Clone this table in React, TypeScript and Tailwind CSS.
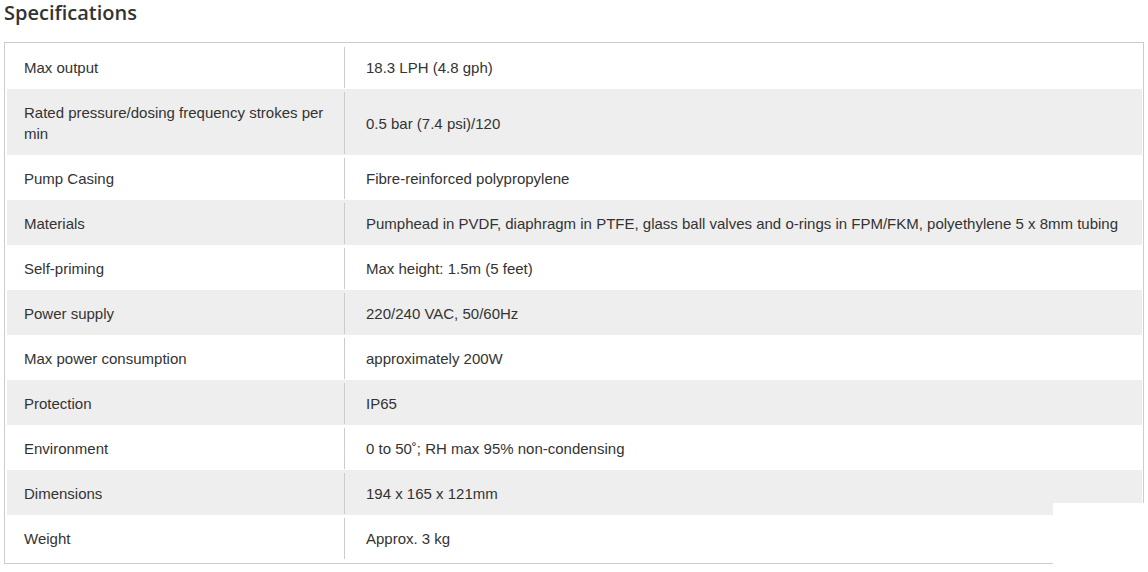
const specs: [string, string][] = [
  ['Max output', '18.3 LPH (4.8 gph)'],
  ['Rated pressure/dosing frequency strokes per min', '0.5 bar (7.4 psi)/120'],
  ['Pump Casing', 'Fibre-reinforced polypropylene'],
  ['Materials', 'Pumphead in PVDF, diaphragm in PTFE, glass ball valves and o-rings in FPM/FKM, polyethylene 5 x 8mm tubing'],
  ['Self-priming', 'Max height: 1.5m (5 feet)'],
  ['Power supply', '220/240 VAC, 50/60Hz'],
  ['Max power consumption', 'approximately 200W'],
  ['Protection', 'IP65'],
  ['Environment', '0 to 50˚; RH max 95% non-condensing'],
  ['Dimensions', '194 x 165 x 121mm'],
  ['Weight', 'Approx. 3 kg'],
];

export default function App() {
  return (
    <div className="relative w-[1148px] h-[572px] overflow-hidden bg-white">
      <h2 className="pl-[4px] pt-[1px] h-[42px] text-[20px] leading-[24px] font-semibold text-[#333] font-['Open_Sans',sans-serif]">
        Specifications
      </h2>
      <div className="ml-[4px] w-[1140px] border border-[#ccc] pl-[2px] pr-[1px] pt-[1px] pb-[3px] font-['Liberation_Sans',Arial,sans-serif] text-[15px] leading-[21px] text-[#333]">
        {specs.map(([label, value], i) => (
          <div
            key={label}
            className={`flex pt-[3px] pb-[1px] ${i % 2 === 1 ? 'bg-[#eee]' : 'bg-white'} ${i === 1 ? 'h-[66px]' : 'h-[45px]'}`}
          >
            <div className="w-[338px] shrink-0 border-r border-[#ccc] pl-[17px] pr-[14px] flex items-center">
              {label}
            </div>
            <div className="flex-1 pl-[21px] flex items-center">{value}</div>
          </div>
        ))}
      </div>
      <div className="absolute left-[1053px] top-[503px] right-0 bottom-0 bg-white" />
    </div>
  );
}
